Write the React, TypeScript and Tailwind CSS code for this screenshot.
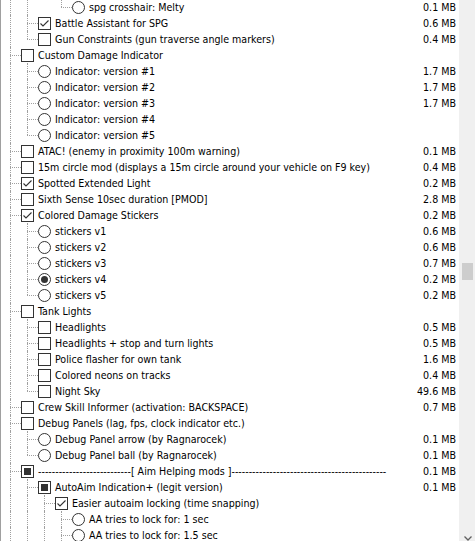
import React from 'react';

type Kind = 'check' | 'radio';
type State = 'off' | 'checked' | 'partial' | 'on';

type Row = {
    label: string;
    size?: string;
    guides: boolean[];
    last?: boolean;
    kind: Kind;
    state?: State;
};

const dashesL = '---------------------------';
const dashesR = '---------------------------------------------';

const rows: Row[] = [
    { label: 'spg crosshair: Melty', size: '0.1 MB', guides: [true, true, false], last: true, kind: 'radio' },
    { label: 'Battle Assistant for SPG', size: '0.6 MB', guides: [true], kind: 'check', state: 'checked' },
    { label: 'Gun Constraints (gun traverse angle markers)', size: '0.4 MB', guides: [true], last: true, kind: 'check' },
    { label: 'Custom Damage Indicator', guides: [], kind: 'check' },
    { label: 'Indicator: version #1', size: '1.7 MB', guides: [true], kind: 'radio' },
    { label: 'Indicator: version #2', size: '1.7 MB', guides: [true], kind: 'radio' },
    { label: 'Indicator: version #3', size: '1.7 MB', guides: [true], kind: 'radio' },
    { label: 'Indicator: version #4', guides: [true], kind: 'radio' },
    { label: 'Indicator: version #5', guides: [true], last: true, kind: 'radio' },
    { label: 'ATAC! (enemy in proximity 100m warning)', size: '0.1 MB', guides: [], kind: 'check' },
    { label: '15m circle mod (displays a 15m circle around your vehicle on F9 key)', size: '0.4 MB', guides: [], kind: 'check' },
    { label: 'Spotted Extended Light', size: '0.2 MB', guides: [], kind: 'check', state: 'checked' },
    { label: 'Sixth Sense 10sec duration [PMOD]', size: '2.8 MB', guides: [], kind: 'check' },
    { label: 'Colored Damage Stickers', size: '0.2 MB', guides: [], kind: 'check', state: 'checked' },
    { label: 'stickers v1', size: '0.6 MB', guides: [true], kind: 'radio' },
    { label: 'stickers v2', size: '0.6 MB', guides: [true], kind: 'radio' },
    { label: 'stickers v3', size: '0.7 MB', guides: [true], kind: 'radio' },
    { label: 'stickers v4', size: '0.2 MB', guides: [true], kind: 'radio', state: 'on' },
    { label: 'stickers v5', size: '0.2 MB', guides: [true], last: true, kind: 'radio' },
    { label: 'Tank Lights', guides: [], kind: 'check' },
    { label: 'Headlights', size: '0.5 MB', guides: [true], kind: 'check' },
    { label: 'Headlights + stop and turn lights', size: '0.5 MB', guides: [true], kind: 'check' },
    { label: 'Police flasher for own tank', size: '1.6 MB', guides: [true], kind: 'check' },
    { label: 'Colored neons on tracks', size: '0.4 MB', guides: [true], kind: 'check' },
    { label: 'Night Sky', size: '49.6 MB', guides: [true], last: true, kind: 'check' },
    { label: 'Crew Skill Informer (activation: BACKSPACE)', size: '0.7 MB', guides: [], kind: 'check' },
    { label: 'Debug Panels (lag, fps, clock indicator etc.)', guides: [], kind: 'check' },
    { label: 'Debug Panel arrow (by Ragnarocek)', size: '0.1 MB', guides: [true], kind: 'radio' },
    { label: 'Debug Panel ball (by Ragnarocek)', size: '0.1 MB', guides: [true], last: true, kind: 'radio' },
    { label: `${dashesL}[ Aim Helping mods ]${dashesR}`, size: '0.1 MB', guides: [], kind: 'check', state: 'partial' },
    { label: 'AutoAim Indication+ (legit version)', size: '0.1 MB', guides: [true], kind: 'check', state: 'partial' },
    { label: 'Easier autoaim locking (time snapping)', guides: [true, true], kind: 'check', state: 'checked' },
    { label: 'AA tries to lock for: 1 sec', guides: [true, true, true], kind: 'radio' },
    { label: 'AA tries to lock for: 1.5 sec', guides: [true, true, true], kind: 'radio' },
];

const Box: React.FC<{ kind: Kind; state?: State }> = ({ kind, state }) => {
    if (kind === 'radio') {
        return (
            <span className="flex h-[13px] w-[13px] shrink-0 items-center justify-center rounded-full border border-[#333333] bg-white">
                {state === 'on' && <span className="h-[7px] w-[7px] rounded-full bg-[#333333]" />}
            </span>
        );
    }
    return (
        <span className="flex h-[13px] w-[13px] shrink-0 items-center justify-center border border-[#333333] bg-white">
            {state === 'partial' && <span className="h-[7px] w-[7px] bg-[#333333]" />}
            {state === 'checked' && (
                <svg width="11" height="11" viewBox="0 0 11 11" fill="none">
                    <path d="M1.5 5.5 L4 8 L9.5 2.5" stroke="#333333" strokeWidth="1.1" />
                </svg>
            )}
        </span>
    );
};

const TreeRow: React.FC<{ row: Row }> = ({ row }) => (
    <div className="flex h-4 items-center pr-[3px]">
        {row.guides.map((g, i) => (
            <span key={i} className="flex h-4 w-[17px] shrink-0">
                {g && <span className="ml-[9px] h-full border-l border-dotted border-[#a0a0a0]" />}
            </span>
        ))}
        <span className="flex h-4 w-[20px] shrink-0">
            <span className="ml-[9px] flex w-[11px] flex-col">
                <span className="h-2 border-l border-dotted border-[#a0a0a0]" />
                <span className={`h-2 border-t border-dotted border-[#a0a0a0] ${row.last ? '' : 'border-l'}`} />
            </span>
        </span>
        <Box kind={row.kind} state={row.state} />
        <span className="ml-[4px] whitespace-nowrap">{row.label}</span>
        <span className="ml-auto shrink-0 whitespace-nowrap pl-2">{row.size}</span>
    </div>
);

const App: React.FC = () => {
    return (
        <div className="flex h-[541px] w-[475px] overflow-hidden bg-white font-['DejaVu_Sans_Condensed','Liberation_Sans',sans-serif] text-[10.6px] leading-4 text-black">
            <div className="min-w-0 flex-1 overflow-hidden border-l border-[#a0a0a0]">
                <div className="-mt-px">
                    {rows.map((r, i) => (
                        <TreeRow key={i} row={r} />
                    ))}
                </div>
            </div>
            <div className="flex w-4 shrink-0 flex-col bg-[#f0f0f0]">
                <div className="ml-[3px] mt-[263px] h-[17px] w-[11px] bg-[#cdcdcd]" />
                <div className="mt-auto flex h-[5px] justify-center pl-[1px]">
                    <svg width="8" height="5" viewBox="0 0 8 5" fill="none">
                        <path d="M0.5 0.5 L4 4 L7.5 0.5" stroke="#606060" strokeWidth="1.3" />
                    </svg>
                </div>
            </div>
        </div>
    );
};

export default App;
